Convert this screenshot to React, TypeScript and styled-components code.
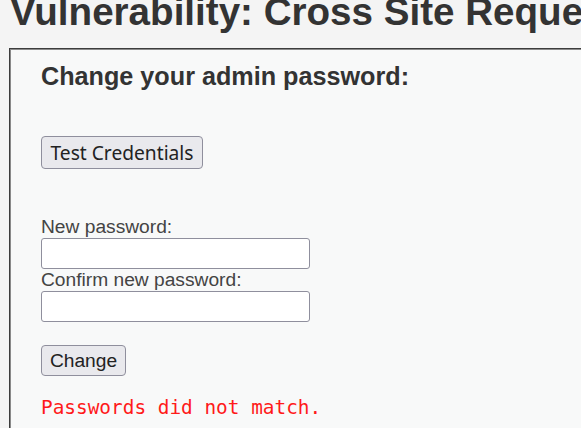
import styled, { createGlobalStyle } from "styled-components";

const GlobalStyle = createGlobalStyle`
  html, body {
    margin: 0;
    padding: 0;
    overflow: hidden;
    background: #f4f4f4;
  }
  body {
    font-family: "Liberation Sans", Arial, sans-serif;
    color: #333;
  }
`;

const Page = styled.div`
  padding-left: 9px;
  width: 760px;
`;

const Title = styled.h1`
  margin: -10px 0 14px 1px;
  font-size: 38.6px;
  line-height: 44px;
  font-weight: bold;
  color: #333;
  white-space: nowrap;
`;

const Box = styled.div`
  border: 1px solid #3c3c3c;
  box-shadow: inset 1px 1px 0 #8a8a8a;
  background: #f8f9f9;
  padding: 13px 31px 30px 31px;
`;

const Heading = styled.h3`
  margin: 0 0 46px 0;
  font-size: 25.2px;
  line-height: 28px;
  font-weight: bold;
  color: #333;
`;

const Form = styled.form`
  display: flex;
  flex-direction: column;
  align-items: flex-start;
`;

const Button = styled.button<{ $font?: string; $w: number; $h: number; $gap?: number }>`
  box-sizing: border-box;
  width: ${(p) => p.$w}px;
  height: ${(p) => p.$h}px;
  margin-top: ${(p) => p.$gap ?? 0}px;
  padding: 0;
  font-family: ${(p) => p.$font ?? '"Liberation Sans", Arial, sans-serif'};
  font-size: 19.2px;
  color: #222;
  background: #e9e9ed;
  border: 1px solid #8f8f9d;
  border-radius: 4px;
  text-align: center;
`;

const Label = styled.label<{ $gap?: number }>`
  margin-top: ${(p) => p.$gap ?? 0}px;
  font-size: 19.2px;
  line-height: 22px;
  color: #444;
`;

const Input = styled.input`
  box-sizing: border-box;
  width: 269px;
  height: 31px;
  margin: 0;
  background: #fff;
  border: 1px solid #8f8f9d;
  border-radius: 3px;
`;

const Message = styled.pre`
  margin: 20px 0 0 0;
  font-family: "DejaVu Sans Mono", "Liberation Mono", monospace;
  font-size: 19.4px;
  line-height: 23px;
  color: #ff1a1a;
`;

export default function App() {
  return (
    <>
      <GlobalStyle />
      <Page>
        <Title>Vulnerability: Cross Site Request Forgery (CSRF)</Title>
        <Box>
          <Heading>Change your admin password:</Heading>
          <Form onSubmit={(e) => e.preventDefault()}>
            <Button type="button" $font='"Noto Sans", sans-serif' $w={162} $h={33}>
              Test Credentials
            </Button>
            <Label $gap={47}>New password:</Label>
            <Input type="password" />
            <Label>Confirm new password:</Label>
            <Input type="password" />
            <Button type="submit" $w={85} $h={31} $gap={23}>
              Change
            </Button>
            <Message>Passwords did not match.</Message>
          </Form>
        </Box>
      </Page>
    </>
  );
}
